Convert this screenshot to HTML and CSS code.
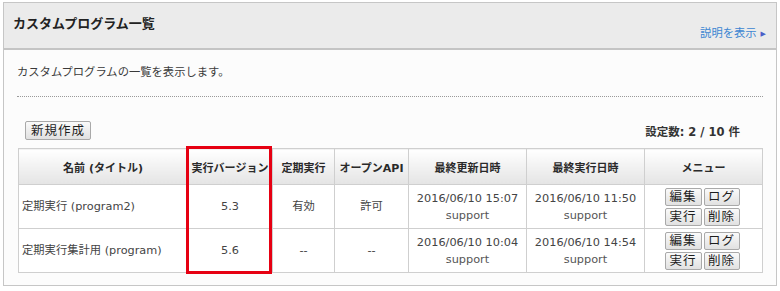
FILE: index.html
```html
<!DOCTYPE html>
<html lang="ja">
<head>
    <meta charset="UTF-8">
    <title>カスタムプログラム一覧</title>
    <link rel="stylesheet" href="styles.css">
</head>
<body>
  <div class="panel">
    <div class="panel-head">
      <h1>カスタムプログラム一覧</h1>
      <a class="help" href="#">説明を表示<span class="arrow">&#9654;</span></a>
    </div>
    <div class="panel-body">
      <p class="desc">カスタムプログラムの一覧を表示します。</p>
      <div class="toolbar">
        <button class="btn btn-new">新規作成</button>
        <p class="count">設定数: 2 / 10 件</p>
      </div>
      <div class="table-wrap">
        <table class="list">
          <thead>
            <tr>
              <th class="c-name">名前 (タイトル)</th>
              <th class="c-ver">実行バージョン</th>
              <th class="c-sched">定期実行</th>
              <th class="c-api">オープンAPI</th>
              <th class="c-date">最終更新日時</th>
              <th class="c-date">最終実行日時</th>
              <th class="c-menu">メニュー</th>
            </tr>
          </thead>
          <tbody>
            <tr>
              <td class="name">定期実行 (program2)</td>
              <td>5.3</td>
              <td>有効</td>
              <td>許可</td>
              <td>2016/06/10 15:07<br><span class="user">support</span></td>
              <td>2016/06/10 11:50<br><span class="user">support</span></td>
              <td>
                <div class="menu">
                  <button class="btn">編集</button>
                  <button class="btn">ログ</button>
                  <button class="btn">実行</button>
                  <button class="btn">削除</button>
                </div>
              </td>
            </tr>
            <tr>
              <td class="name">定期実行集計用 (program)</td>
              <td>5.6</td>
              <td>--</td>
              <td>--</td>
              <td>2016/06/10 10:04<br><span class="user">support</span></td>
              <td>2016/06/10 14:54<br><span class="user">support</span></td>
              <td>
                <div class="menu">
                  <button class="btn">編集</button>
                  <button class="btn">ログ</button>
                  <button class="btn">実行</button>
                  <button class="btn">削除</button>
                </div>
              </td>
            </tr>
          </tbody>
        </table>
        <div class="highlight"></div>
      </div>
    </div>
  </div>
</body>
</html>
```

FILE: styles.css
```css
*{
    margin: 0;
    padding: 0;
    box-sizing: border-box;
}
body{
    background: #ffffff;
    font-family: "DejaVu Sans", "Noto Sans CJK JP", sans-serif;
    font-size: 11.3px;
    color: #3a3a3a;
}
.panel{
    width: 774px;
    height: 284px;
    margin: 2px 0 0 3px;
    border: 1px solid #c6c6c6;
    background: #fcfcfc;
}
.panel-head{
    height: 47px;
    display: flex;
    justify-content: space-between;
    align-items: flex-start;
    background: #ebebeb;
    border-bottom: 2px solid #c4c4c4;
    padding: 0 10px 0 9px;
}
h1{
    font-size: 13px;
    font-weight: bold;
    color: #222;
    line-height: 18px;
    padding-top: 12px;
}
.help{
    align-self: flex-end;
    margin-bottom: 6px;
    color: #3c86d2;
    text-decoration: none;
    font-size: 11.3px;
    line-height: 16px;
}
.arrow{
    font-size: 7px;
    color: #4a5fc8;
    margin-left: 4px;
    vertical-align: 1px;
}
.panel-body{
    padding: 0 13px;
}
.desc{
    line-height: 16px;
    padding: 15px 0 15px;
    border-bottom: 1px dotted #9a9a9a;
}
.toolbar{
    display: flex;
    justify-content: space-between;
    align-items: center;
    margin-top: 24px;
    padding: 0 23px 0 8px;
}
.btn{
    font-family: "DejaVu Sans", "Noto Sans CJK JP", sans-serif;
    font-size: 12.5px;
    color: #1e1e1e;
    background: linear-gradient(#fafafa, #e1e1e1);
    border: 1px solid #a9a9a9;
    border-radius: 2px;
    line-height: 16px;
    height: 18px;
    padding: 0 4px;
}
.btn-new{
    width: 66px;
    height: 19px;
    letter-spacing: 1px;
}
.count{
    font-weight: bold;
    font-size: 11.5px;
    color: #333;
}
.table-wrap{
    position: relative;
    margin: 8px 0 0 1px;
}
.list{
    width: 744px;
    border-collapse: collapse;
    table-layout: fixed;
    border: 1px solid #c8c8c8;
    background: #ffffff;
}
.list th{
    height: 36px;
    background: linear-gradient(#ffffff, #e4e4e4);
    border: 1px solid #cfcfcf;
    font-weight: bold;
    font-size: 11px;
    color: #2a2a2a;
    white-space: nowrap;
}
.list td{
    height: 44px;
    border: 1px solid #cfcfcf;
    text-align: center;
    line-height: 17px;
    color: #444;
}
.list td.name{
    text-align: left;
    padding-left: 3px;
}
.c-name{ width: 169px; }
.c-ver{ width: 85px; }
.c-sched{ width: 62px; }
.c-api{ width: 74px; }
.c-date{ width: 118px; }
.c-menu{ width: 118px; }
.user{
    color: #555;
}
.menu{
    display: grid;
    grid-template-columns: 37px 36px;
    gap: 2px;
    justify-content: center;
    margin-left: -3px;
}
.menu .btn{
    padding: 0;
    letter-spacing: 1px;
}
.highlight{
    position: absolute;
    left: 168px;
    top: -2px;
    width: 86px;
    height: 128px;
    border: 3px solid #e60012;
    pointer-events: none;
}
```
